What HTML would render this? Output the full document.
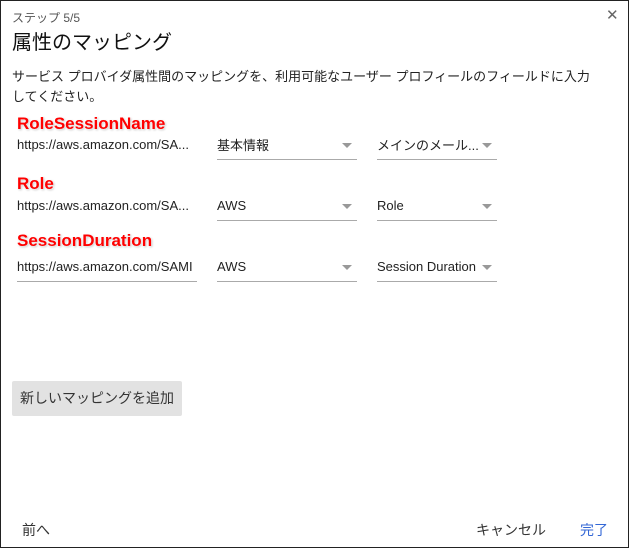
<!DOCTYPE html><html><head><style>
body{margin:0;width:629px;height:548px;overflow:hidden;font-family:"Liberation Sans","Noto Sans CJK JP",sans-serif;background:#fff}
.f{position:absolute;left:0;top:0;border:1px solid #222;box-sizing:border-box;width:629px;height:548px}
.a{position:absolute;white-space:nowrap}
.lab{color:#f00;font-weight:bold;font-size:17px;text-shadow:0 0 2px #fff,1px 1px 2px #bbb}
.t{font-size:13px;color:#222}
.u{position:absolute;height:1px;background:#aaa}
.ar{position:absolute;width:0;height:0;border-left:5px solid transparent;border-right:5px solid transparent;border-top:5px solid #999}
</style></head><body><div class="f">
<div class="a" style="left:11px;top:8px;font-size:12px;color:#555">ステップ 5/5</div>
<div class="a" style="left:605px;top:5px;font-size:15px;color:#666">✕</div>
<div class="a" style="left:11px;top:25px;font-size:20px;color:#111">属性のマッピング</div>
<div class="a t" style="left:11px;top:66px;line-height:20px">サービス プロバイダ属性間のマッピングを、利用可能なユーザー プロフィールのフィールドに入力<br>してください。</div>

<div class="a lab" style="left:16px;top:113px">RoleSessionName</div>
<div class="a t" style="left:16px;top:136px">https://aws.amazon.com/SA...</div>
<div class="a t" style="left:216px;top:134px">基本情報</div><div class="ar" style="left:341px;top:142px"></div>
<div class="a t" style="left:376px;top:134px">メインのメール...</div><div class="ar" style="left:481px;top:142px"></div>
<div class="u" style="left:216px;top:158px;width:140px"></div><div class="u" style="left:376px;top:158px;width:120px"></div>

<div class="a lab" style="left:16px;top:173px">Role</div>
<div class="a t" style="left:16px;top:197px">https://aws.amazon.com/SA...</div>
<div class="a t" style="left:216px;top:197px">AWS</div><div class="ar" style="left:341px;top:203px"></div>
<div class="a t" style="left:376px;top:197px">Role</div><div class="ar" style="left:481px;top:203px"></div>
<div class="u" style="left:216px;top:219px;width:140px"></div><div class="u" style="left:376px;top:219px;width:120px"></div>

<div class="a lab" style="left:16px;top:230px">SessionDuration</div>
<div class="a t" style="left:16px;top:258px">https://aws.amazon.com/SAMI</div>
<div class="a t" style="left:216px;top:258px">AWS</div><div class="ar" style="left:341px;top:264px"></div>
<div class="a t" style="left:376px;top:258px">Session Duration</div><div class="ar" style="left:481px;top:264px"></div>
<div class="u" style="left:16px;top:280px;width:180px"></div><div class="u" style="left:216px;top:280px;width:140px"></div><div class="u" style="left:376px;top:280px;width:120px"></div>

<div class="a" style="left:11px;top:380px;width:170px;height:35px;background:#e2e2e2;border-radius:2px;font-size:14px;color:#333;line-height:35px;text-align:center">新しいマッピングを追加</div>
<div class="a" style="left:21px;top:519px;font-size:14px;color:#333">前へ</div>
<div class="a" style="left:475px;top:519px;font-size:14px;color:#333">キャンセル</div>
<div class="a" style="left:579px;top:519px;font-size:14px;color:#3367d6">完了</div>
</div></body></html>
